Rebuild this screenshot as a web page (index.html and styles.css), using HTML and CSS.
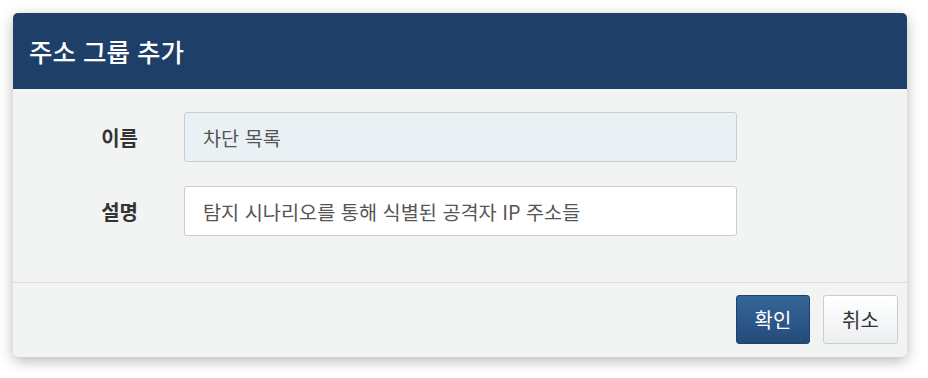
FILE: index.html
```html
<!DOCTYPE html>
<html lang="ko">
<head>
<meta charset="utf-8">
<title>주소 그룹 추가</title>
<link rel="stylesheet" href="styles.css">
</head>
<body>
<div class="modal">
  <div class="modal-header">
    <h4 class="modal-title">주소 그룹 추가</h4>
  </div>
  <div class="modal-body">
    <div class="form-row">
      <label class="form-label">이름</label>
      <div class="form-input readonly">차단 목록</div>
    </div>
    <div class="form-row">
      <label class="form-label">설명</label>
      <div class="form-input">탐지 시나리오를 통해 식별된 공격자 IP 주소들</div>
    </div>
  </div>
  <div class="modal-footer">
    <button class="btn btn-primary">확인</button>
    <button class="btn btn-default">취소</button>
  </div>
</div>
</body>
</html>
```
FILE: styles.css
```css
* { box-sizing: border-box; }
html, body { margin: 0; padding: 0; background: #ffffff; }
body {
  padding: 13px 21px 21px 13px;
  font-family: "Noto Sans CJK KR", "Noto Sans", sans-serif;
}
.modal {
  width: 894px;
  height: 344px;
  background: #f2f4f3;
  border-radius: 5px;
  box-shadow: 0 4px 14px rgba(0,0,0,0.28);
  overflow: hidden;
  display: flex;
  flex-direction: column;
}
.modal-header {
  height: 76px;
  background: #1e4068;
  display: flex;
  align-items: center;
  padding-left: 16px;
}
.modal-title {
  margin: 0;
  color: #ffffff;
  font-size: 25.5px;
  font-weight: 500;
  line-height: 1;
}
.modal-body {
  padding: 23px 0 0 0;
  height: 193px;
  display: flex;
  flex-direction: column;
  gap: 24px;
}
.form-row {
  display: flex;
  align-items: center;
}
.form-label {
  width: 125px;
  text-align: right;
  font-size: 20px;
  font-weight: 700;
  color: #333333;
  margin-right: 46px;
}
.form-input {
  width: 553px;
  height: 50px;
  border: 1px solid #cccccc;
  border-radius: 3px;
  background: #ffffff;
  padding: 0 18px;
  display: flex;
  align-items: center;
  font-size: 19.7px;
  color: #555555;
}
.form-input.readonly { background: #e9f1f4; }
.modal-footer {
  flex: 1;
  border-top: 1px solid #dcdcdc;
  display: flex;
  justify-content: flex-end;
  align-items: flex-start;
  gap: 13px;
  padding: 12px 9px 0 0;
}
.btn {
  height: 49px;
  border-radius: 3px;
  font-family: inherit;
  font-size: 20px;
  padding: 0;
  cursor: pointer;
}
.btn-primary {
  width: 74px;
  color: #ffffff;
  border: 1px solid #1f416b;
  background: linear-gradient(#366699, #234b7a);
}
.btn-default {
  width: 75px;
  color: #333333;
  border: 1px solid #cccccc;
  background: linear-gradient(#ffffff, #eceff2);
}
```
